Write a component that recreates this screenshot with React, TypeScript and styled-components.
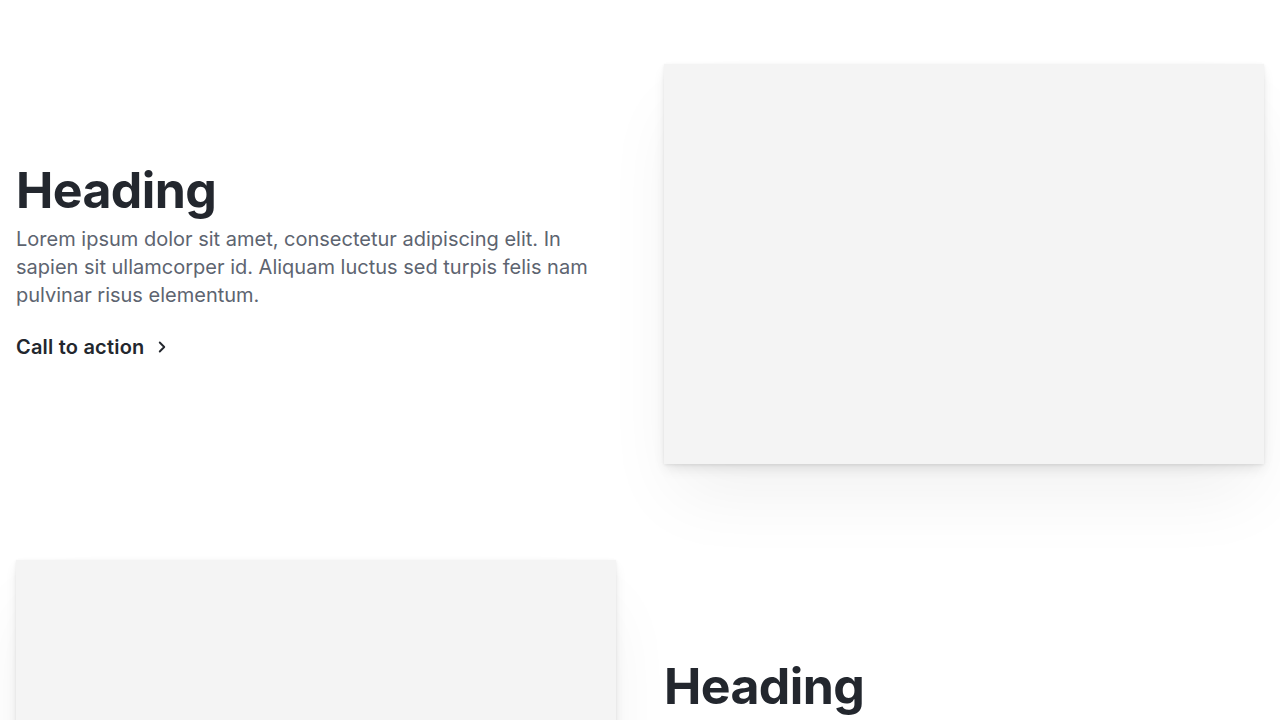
import React from 'react'
import styled, { createGlobalStyle } from 'styled-components'
import { ChevronRight } from 'lucide-react'

const GlobalStyle = createGlobalStyle`
  * { box-sizing: border-box; }
  body {
    margin: 0;
    background: #ffffff;
    font-family: Inter, 'Noto Sans', sans-serif;
    -webkit-font-smoothing: antialiased;
  }
`

const Page = styled.main`
  display: flex;
  flex-direction: column;
  gap: 96px;
  padding: 64px 16px;
`

const Row = styled.section`
  display: grid;
  grid-template-columns: 600px 600px;
  column-gap: 48px;
  align-items: center;
`

const Text = styled.div`
  display: flex;
  flex-direction: column;
  padding-bottom: 5px;
`

const Heading = styled.h2`
  margin: 0;
  font-size: 50px;
  line-height: 56px;
  font-weight: 700;
  letter-spacing: -0.6px;
  color: #23272e;
`

const Body = styled.p`
  margin: 7px 0 0;
  max-width: 596px;
  font-size: 20px;
  line-height: 28px;
  font-weight: 400;
  color: #5d6470;
  letter-spacing: 0;
`

const Cta = styled.a`
  margin-top: 24px;
  display: inline-flex;
  align-items: center;
  gap: 9px;
  font-size: 20px;
  line-height: 28px;
  font-weight: 600;
  letter-spacing: 0.2px;
  color: #23272e;
  text-decoration: none;
  cursor: pointer;
`

const Media = styled.div`
  width: 600px;
  height: 400px;
  background: #f4f4f4;
  box-shadow: 0 1px 3px rgba(0, 0, 0, 0.08), 0 6px 12px -2px rgba(0, 0, 0, 0.1),
    0 40px 70px -10px rgba(0, 0, 0, 0.06);
`

const Feature: React.FC<{ reverse?: boolean }> = ({ reverse }) => {
  const text = (
    <Text>
      <Heading>Heading</Heading>
      <Body>
        Lorem ipsum dolor sit amet, consectetur adipiscing elit. In sapien sit
        ullamcorper id. Aliquam luctus sed turpis felis nam pulvinar risus
        elementum.
      </Body>
      <div>
        <Cta>
          Call to action <ChevronRight size={18} strokeWidth={2.5} />
        </Cta>
      </div>
    </Text>
  )
  return (
    <Row>
      {reverse ? (
        <>
          <Media />
          {text}
        </>
      ) : (
        <>
          {text}
          <Media />
        </>
      )}
    </Row>
  )
}

export default function App() {
  return (
    <>
      <GlobalStyle />
      <Page>
        <Feature />
        <Feature reverse />
      </Page>
    </>
  )
}
